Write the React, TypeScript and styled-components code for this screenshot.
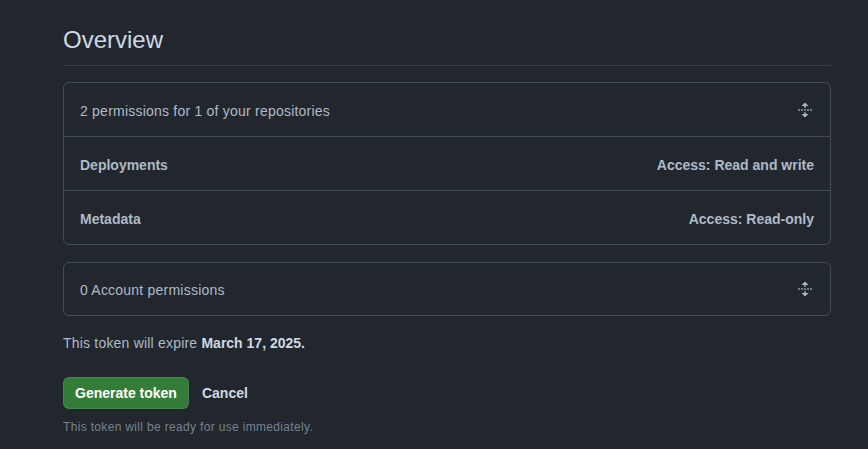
import React from "react";
import styled, { createGlobalStyle } from "styled-components";

const GlobalStyle = createGlobalStyle`
    html, body {
        margin: 0;
        background: #22272e;
    }
    body {
        font-family: "Liberation Sans", Arial, sans-serif;
        color: #adbac7;
        font-size: 14px;
        line-height: 1.5;
    }
`;

type Permission = { name: string; access: string };

const repoPermissions: Permission[] = [
    { name: "Deployments", access: "Access: Read and write" },
    { name: "Metadata", access: "Access: Read-only" },
];

const UnfoldIcon = () => (
    <svg width="16" height="16" viewBox="0 0 16 16" fill="currentColor">
        <path d="m8.177.677 2.896 2.896a.25.25 0 0 1-.177.427H8.75v1.25a.75.75 0 0 1-1.5 0V4H5.104a.25.25 0 0 1-.177-.427L7.823.677a.25.25 0 0 1 .354 0ZM7.25 10.75a.75.75 0 0 1 1.5 0V12h2.146a.25.25 0 0 1 .177.427l-2.896 2.896a.25.25 0 0 1-.354 0l-2.896-2.896A.25.25 0 0 1 5.104 12H7.25v-1.25Zm-5-2a.75.75 0 0 0 0-1.5h-.5a.75.75 0 0 0 0 1.5h.5ZM6 8a.75.75 0 0 1-.75.75h-.5a.75.75 0 0 1 0-1.5h.5A.75.75 0 0 1 6 8Zm2.25.75a.75.75 0 0 0 0-1.5h-.5a.75.75 0 0 0 0 1.5h.5ZM12 8a.75.75 0 0 1-.75.75h-.5a.75.75 0 0 1 0-1.5h.5A.75.75 0 0 1 12 8Zm2.25.75a.75.75 0 0 0 0-1.5h-.5a.75.75 0 0 0 0 1.5h.5Z" />
    </svg>
);

const App = () => {
    return (
        <>
            <GlobalStyle />
            <Page>
                <Title>Overview</Title>

                <Box>
                    <BoxHeader>
                        <HeaderText>2 permissions for 1 of your repositories</HeaderText>
                        <IconButton aria-label="Expand">
                            <UnfoldIcon />
                        </IconButton>
                    </BoxHeader>
                    {repoPermissions.map((item) => (
                        <Row key={item.name}>
                            <RowLabel>{item.name}</RowLabel>
                            <RowLabel>{item.access}</RowLabel>
                        </Row>
                    ))}
                </Box>

                <Box $spaced>
                    <BoxHeader $last>
                        <HeaderText>0 Account permissions</HeaderText>
                        <IconButton aria-label="Expand">
                            <UnfoldIcon />
                        </IconButton>
                    </BoxHeader>
                </Box>

                <Expiry>
                    This token will expire <strong>March 17, 2025.</strong>
                </Expiry>

                <Actions>
                    <PrimaryButton>Generate token</PrimaryButton>
                    <LinkButton>Cancel</LinkButton>
                </Actions>
                <Note>This token will be ready for use immediately.</Note>
            </Page>
        </>
    );
};

export default App;

const Page = styled.div`
    width: 768px;
    margin-left: 63px;
    padding-top: 22px;
`;

const Title = styled.h2`
    margin: 0;
    font-size: 24px;
    font-weight: 400;
    line-height: 36px;
    color: #cdd9e5;
    padding-bottom: 7px;
    border-bottom: 1px solid #373e47;
`;

const Box = styled.div<{ $spaced?: boolean }>`
    margin-top: ${(p) => (p.$spaced ? "17px" : "16px")};
    border: 1px solid #444c56;
    border-radius: 6px;
    overflow: hidden;
`;

const BoxHeader = styled.div<{ $last?: boolean }>`
    display: flex;
    align-items: center;
    justify-content: space-between;
    height: ${(p) => (p.$last ? "52px" : "53px")};
    padding: 0 16px;
    color: #adbac7;
    border-bottom: ${(p) => (p.$last ? "none" : "1px solid #444c56")};
`;

const HeaderText = styled.span`
    padding-top: 3px;
    letter-spacing: 0.22px;
`;

const IconButton = styled.span`
    display: flex;
    color: #adbac7;
    margin-right: 1px;
`;

const Row = styled.div`
    display: flex;
    align-items: center;
    justify-content: space-between;
    height: 53px;
    padding: 0 16px;
    & + & {
        border-top: 1px solid #444c56;
    }
`;

const RowLabel = styled.span`
    padding-top: 3px;
    font-weight: 700;
    color: #adbac7;
`;

const Expiry = styled.p`
    margin: 17px 0 0;
    color: #adbac7;
    letter-spacing: 0.2px;
    strong {
        font-weight: 700;
        letter-spacing: 0;
        color: #cdd9e5;
    }
`;

const Actions = styled.div`
    display: flex;
    align-items: center;
    margin-top: 23px;
`;

const PrimaryButton = styled.button`
    height: 32px;
    padding: 0 11px;
    border: 1px solid rgba(205, 217, 229, 0.1);
    border-radius: 6px;
    background: #347d39;
    color: #ffffff;
    font-family: inherit;
    font-size: 14px;
    font-weight: 700;
`;

const LinkButton = styled.button`
    margin-left: 13px;
    padding: 0;
    border: none;
    background: none;
    color: #cdd9e5;
    font-family: inherit;
    font-size: 14px;
    font-weight: 700;
`;

const Note = styled.p`
    margin: 9px 0 0;
    font-size: 12px;
    line-height: 18px;
    letter-spacing: 0.33px;
    color: #768390;
`;
